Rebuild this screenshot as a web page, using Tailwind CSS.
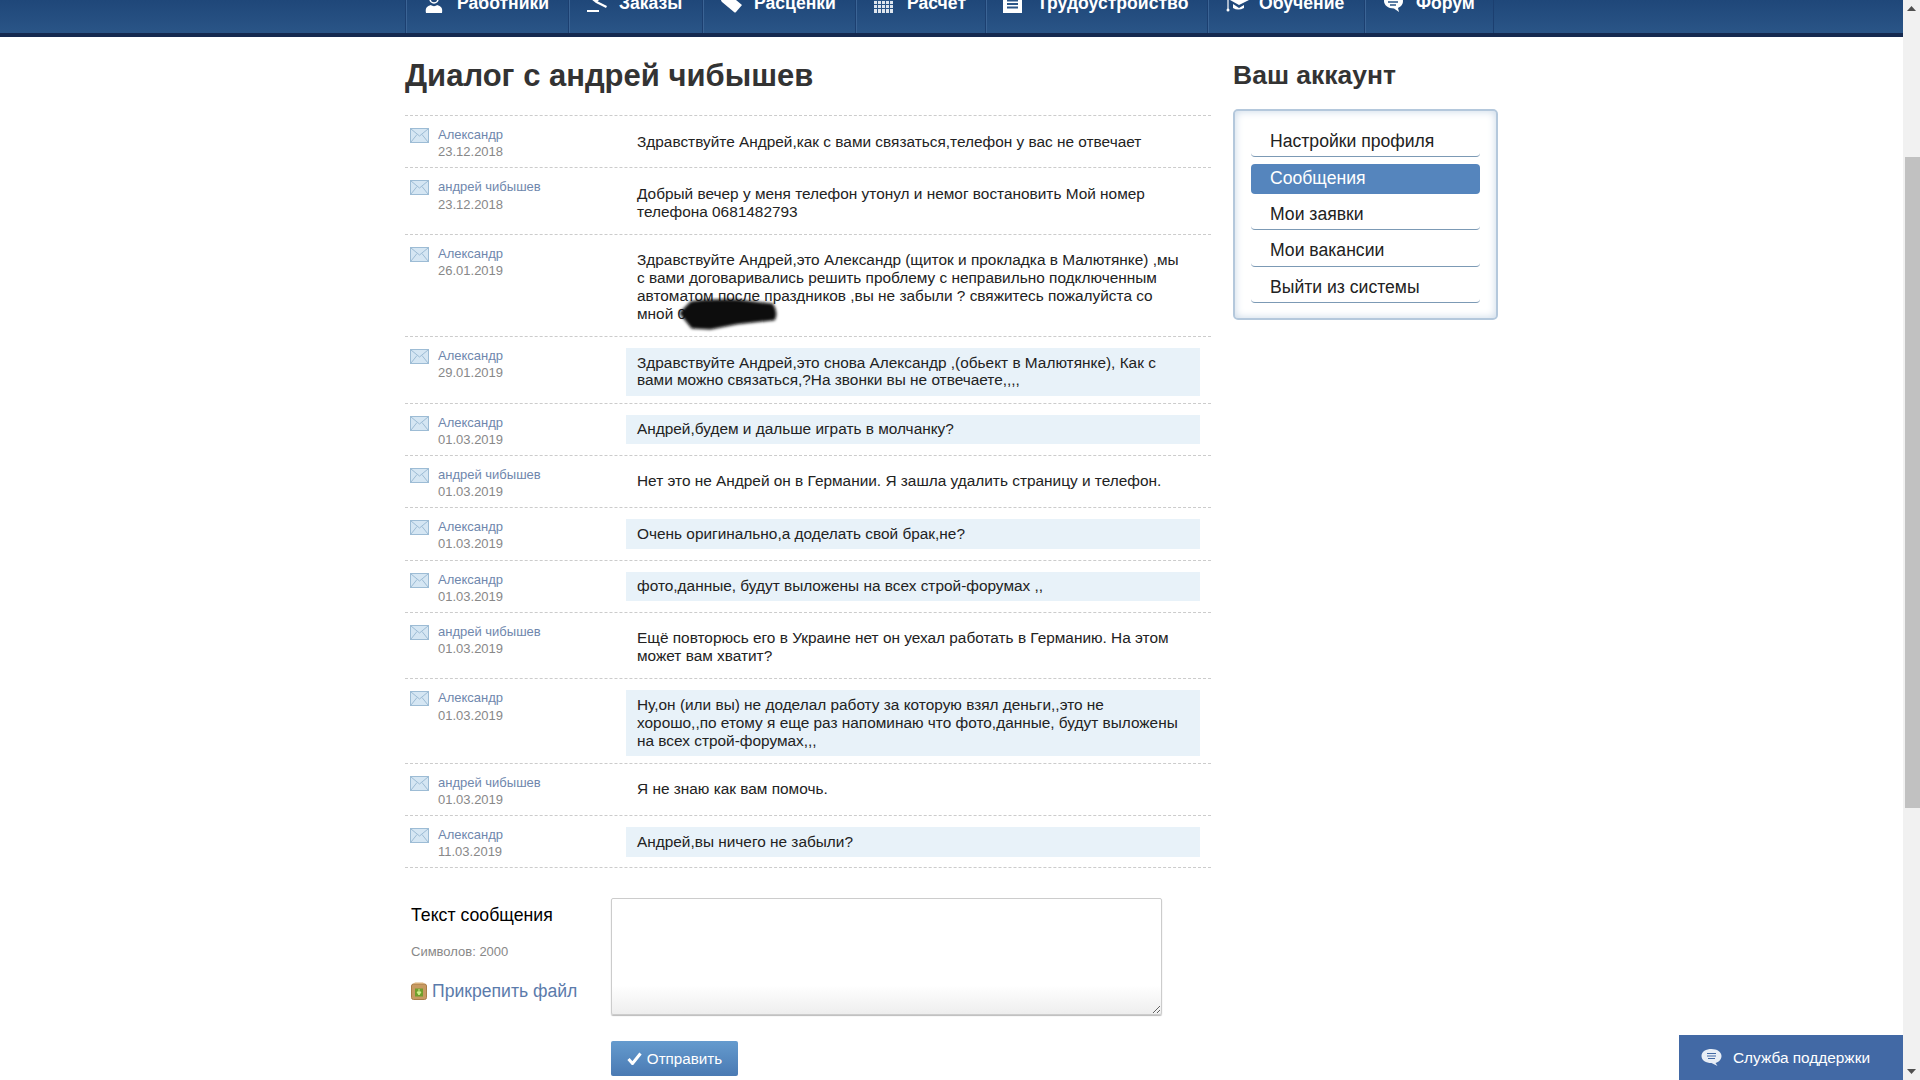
<!DOCTYPE html>
<html lang="ru">
<head>
    <meta charset="UTF-8">
    <meta name="viewport" content="width=device-width, initial-scale=1.0">
    <title>Диалог с андрей чибышев</title>
    <script src="https://cdn.jsdelivr.net/npm/@tailwindcss/browser@4"></script>
</head>
<body class="bg-white">
    <div class="relative flex h-[1080px] w-[1920px] overflow-hidden font-['Liberation_Sans',Arial,sans-serif]">
        <div class="w-[1903px]">
            <!-- Шапка, страница прокручена, верх обрезан -->
            <header class="h-[37px] border-b-[4px] border-[#15294f] bg-linear-to-b from-[#1f4779] to-[#2a5587]">
                <nav class="mx-auto flex w-[1093px] text-[17.600px] font-bold text-white">
                    <a class="h-[33px] w-[163px] overflow-hidden border-l border-[#1c3f70] pl-[19px] shadow-[inset_1px_0_0_#3b6495]">
                        <span class="-mt-[6px] flex h-[18px] items-center">
                            <span class="w-[32px]">
                                <svg width="18" height="18" viewBox="0 0 18 18" class="mt-[1px]"><circle cx="9" cy="4" r="4" fill="none" stroke="#fff" stroke-width="1.5"/><path d="M1 18c-1-5 1-7 5-8 1 1.500 5 1.500 6 0 4 1 6 3 5 8z" fill="#fff"/></svg>
                            </span>Работники
                        </span>
                    </a>
                    <a class="h-[33px] w-[134px] overflow-hidden border-l border-[#1c3f70] pl-[17px] shadow-[inset_1px_0_0_#3b6495]">
                        <span class="-mt-[6px] flex h-[18px] items-center">
                            <span class="w-[33px]">
                                <svg width="22" height="18" viewBox="0 0 22 18" class="mt-[1px]"><path d="M8 1l5 4-3 3-5-4zM11 6l10 5-1 2-10-5z" fill="#fff"/><rect x="1" y="15" width="12" height="2" fill="#fff"/></svg>
                            </span>Заказы
                        </span>
                    </a>
                    <a class="h-[33px] w-[153px] overflow-hidden border-l border-[#1c3f70] pl-[17px] shadow-[inset_1px_0_0_#3b6495]">
                        <span class="-mt-[6px] flex h-[18px] items-center">
                            <span class="w-[34px]">
                                <svg width="23" height="19" viewBox="0 0 23 19" class="mt-[1px]"><path d="M1 1h9l12 10-6 7q-1 1-2 0L2 8q-1-1-1-2z" fill="#fff"/></svg>
                            </span>Расценки
                        </span>
                    </a>
                    <a class="h-[33px] w-[130px] overflow-hidden border-l border-[#1c3f70] pl-[18px] shadow-[inset_1px_0_0_#3b6495]">
                        <span class="-mt-[6px] flex h-[18px] items-center">
                            <span class="w-[33px]">
                                <svg width="19" height="19" viewBox="0 0 19 19" class="mt-[1px]"><rect x="0" y="0" width="19" height="19" fill="#dfe6ef"/><path d="M3.500 0v19M7.500 0v19M11.500 0v19M15.500 0v19M0 6.500h19M0 10.500h19M0 14.500h19" stroke="#2a5587" stroke-width="1"/></svg>
                            </span>Расчет
                        </span>
                    </a>
                    <a class="h-[33px] w-[222px] overflow-hidden border-l border-[#1c3f70] pl-[17px] shadow-[inset_1px_0_0_#3b6495]">
                        <span class="-mt-[6px] flex h-[18px] items-center">
                            <span class="w-[34px]">
                                <svg width="19" height="19" viewBox="0 0 19 19" class="mt-[1px]"><rect width="19" height="19" fill="#fff"/><path d="M4 6.500h11M4 10h11M4 13.500h11" stroke="#2a5587" stroke-width="2"/></svg>
                            </span>Трудоустройство
                        </span>
                    </a>
                    <a class="h-[33px] w-[157px] overflow-hidden border-l border-[#1c3f70] pl-[18px] shadow-[inset_1px_0_0_#3b6495]">
                        <span class="-mt-[6px] flex h-[18px] items-center">
                            <span class="w-[33px]">
                                <svg width="23" height="19" viewBox="0 0 23 19" class="mt-[1px]"><path d="M13 1l10 5-10 5-9-5z" fill="#fff"/><path d="M7 10v4q5 3 11 0v-3l-5 3z" fill="#fff"/><path d="M2 6v9" stroke="#fff" stroke-width="1.200"/><circle cx="2" cy="16" r="1.500" fill="#fff"/></svg>
                            </span>Обучение
                        </span>
                    </a>
                    <a class="h-[33px] w-[130px] overflow-hidden border-x border-[#1c3f70] pl-[18px] shadow-[inset_1px_0_0_#3b6495]">
                        <span class="-mt-[6px] flex h-[18px] items-center">
                            <span class="w-[33px]">
                                <svg width="21" height="19" viewBox="0 0 21 19" class="mt-[1px]"><path d="M10 0c6 0 10 3 10 7s-3 6-5 7l1 4-5-3.500C5 14.500 1 11 1 7s4-7 9-7z" fill="#fff"/><path d="M5 5h10M5 8h10M7 11h6" stroke="#2a5587" stroke-width="1.500"/></svg>
                            </span>Форум
                        </span>
                    </a>
                </nav>
            </header>

            <main class="mx-auto flex w-[1093px] gap-[22px] pt-[18px]">
                <section class="w-[806px]">
                    <h1 class="mb-[20px] h-[40px] text-[31px] leading-[42px] font-bold text-[#333]">Диалог с андрей чибышев</h1>
                    <div id="messages" class="border-t border-dashed border-[#ccc]"></div>

                    <form class="mt-[30px] flex">
                        <div class="w-[206px] pl-[6px]">
                            <div class="mt-[7px] text-[17.700px] leading-[20px] text-black">Текст сообщения</div>
                            <div class="mt-[19px] text-[13px] leading-[16px] text-[#888]">Символов: 2000</div>
                            <a class="mt-[20px] flex items-center gap-[5px] text-[17.600px] leading-[22px] text-[#5b7bab]">
                                <svg width="16" height="18" viewBox="0 0 16 18"><rect x="0.500" y="2" width="15" height="15.500" rx="2" fill="#c79a62" stroke="#a97c48"/><path d="M2 2l2-1.500h8L14 2z" fill="#dab27d"/><rect x="4" y="6.500" width="8" height="8" fill="#6f9e2c"/><path d="M8 7v3M6 10l2 3 2-3z" fill="#cdf08a" stroke="#cdf08a"/></svg>
                                Прикрепить файл
                            </a>
                        </div>
                        <div>
                            <textarea class="block h-[117px] w-[551px] resize rounded-[2px] border border-[#ccc] bg-linear-to-b from-white from-75% to-[#eeeeee] shadow-[0_1px_1px_#bbb]"></textarea>
                            <button type="button" class="mt-[26px] flex h-[35px] w-[127px] items-center justify-center gap-[5px] rounded-[2px] bg-linear-to-b from-[#659bce] to-[#4a7ab3] text-[15.200px] text-white">
                                <svg width="15" height="13" viewBox="0 0 15 13"><path d="M1.500 7l4 4.500L13.500 1.500" fill="none" stroke="#fff" stroke-width="3"/></svg>
                                Отправить
                            </button>
                        </div>
                    </form>
                </section>

                <aside class="w-[265px]">
                    <h2 class="mb-[14px] h-[40px] text-[26.500px] leading-[40px] font-bold text-[#333]">Ваш аккаунт</h2>
                    <div class="h-[211px] rounded-[5px] border-2 border-[#b4c8dc] px-[16px] pt-[16px] text-[17.600px] text-[#222] shadow-[inset_0_0_8px_#c6d6e6]">
                        <a class="mb-[6.500px] block h-[30px] rounded-b-[4px] border-b border-[#7c9ab5] pl-[19px] leading-[28px]">Настройки профиля</a>
                        <a class="mb-[6.500px] block h-[30px] rounded-[4px] bg-[#5585bd] pl-[19px] leading-[29px] text-white">Сообщения</a>
                        <a class="mb-[6.500px] block h-[30px] rounded-b-[4px] border-b border-[#7c9ab5] pl-[19px] leading-[28px]">Мои заявки</a>
                        <a class="mb-[6.500px] block h-[30px] rounded-b-[4px] border-b border-[#7c9ab5] pl-[19px] leading-[27px]">Мои вакансии</a>
                        <a class="mb-[6.500px] block h-[30px] rounded-b-[4px] border-b border-[#7c9ab5] pl-[19px] leading-[29px]">Выйти из системы</a>
                    </div>
                </aside>
            </main>
        </div>

        <!-- Полоса прокрутки -->
        <div class="flex w-[17px] flex-col bg-[#f1f1f1]">
            <div class="flex h-[17px] items-center justify-center">
                <svg width="9" height="5" viewBox="0 0 9 5"><path d="M4.500 0L9 5H0z" fill="#505050"/></svg>
            </div>
            <div class="mt-[140px] ml-[2px] h-[651px] bg-[#c1c1c1]"></div>
            <div class="mt-auto flex h-[17px] items-center justify-center">
                <svg width="9" height="5" viewBox="0 0 9 5"><path d="M0 0h9L4.500 5z" fill="#505050"/></svg>
            </div>
        </div>

        <!-- Служба поддержки -->
        <a class="absolute right-[17px] bottom-0 flex h-[45px] w-[224px] items-center gap-[11px] bg-[#4269a5] pl-[22px] text-[15.400px] text-white">
            <svg width="21" height="19" viewBox="0 0 21 19"><path d="M10.500 1c5.500 0 10 2.800 10 7s-4 6.500-6 7l2 3-6-3C5 15 .5 12.500 .5 8s4.500-7 10-7z" fill="#e8eef6"/><path d="M6 5.500h9M6 8h9M7 10.500h7" stroke="#4269a5" stroke-width="1.200"/></svg>
            Служба поддержки
        </a>
    </div>

    <script>
        const messages = [
            { name: "Александр", date: "23.12.2018", text: "Здравствуйте Андрей,как с вами связаться,телефон у вас не отвечает" },
            { name: "андрей чибышев", date: "23.12.2018", text: "Добрый вечер у меня телефон утонул и немог востановить Мой номер телефона 0681482793" },
            { name: "Александр", date: "26.01.2019", text: "Здравствуйте Андрей,это Александр (щиток и прокладка в Малютянке) ,мы с вами договаривались решить проблему с неправильно подключенным автоматом после праздников ,вы не забыли ? свяжитесь пожалуйста со мной 09", hidden: true },
            { name: "Александр", date: "29.01.2019", mine: true, text: "Здравствуйте Андрей,это снова Александр ,(обьект в Малютянке), Как с вами можно связаться,?На звонки вы не отвечаете,,,," },
            { name: "Александр", date: "01.03.2019", mine: true, text: "Андрей,будем и дальше играть в молчанку?" },
            { name: "андрей чибышев", date: "01.03.2019", text: "Нет это не Андрей он в Германии. Я зашла удалить страницу и телефон." },
            { name: "Александр", date: "01.03.2019", mine: true, text: "Очень оригинально,а доделать свой брак,не?" },
            { name: "Александр", date: "01.03.2019", mine: true, text: "фото,данные, будут выложены на всех строй-форумах ,," },
            { name: "андрей чибышев", date: "01.03.2019", text: "Ещё повторюсь его в Украине нет он уехал работать в Германию. На этом может вам хватит?" },
            { name: "Александр", date: "01.03.2019", mine: true, text: "Ну,он (или вы) не доделал работу за которую взял деньги,,это не хорошо,,по етому я еще раз напоминаю что фото,данные, будут выложены на всех строй-форумах,,," },
            { name: "андрей чибышев", date: "01.03.2019", text: "Я не знаю как вам помочь." },
            { name: "Александр", date: "11.03.2019", mine: true, text: "Андрей,вы ничего не забыли?" }
        ];
        const envelope = `<svg width="19" height="15" viewBox="0 0 19 15" class="mt-[2px] shrink-0"><rect x="0.500" y="0.500" width="18" height="14" fill="#d5e6f3" stroke="#9dbcd5"/><path d="M1 1l8.500 7L18 1M1 14l6-7.500M18 14l-6-7.500" fill="none" stroke="#9dbcd5"/></svg>`;
        const blot = `<svg width="106" height="36" viewBox="0 0 102 34" class="absolute top-[62px] left-[270px]"><defs><filter id="smear"><feGaussianBlur stdDeviation="1.500"/></filter></defs><path d="M4 15L15 4q15-3 45-2l34 4q6 8 2 16l-36 4-26 5-18-1z" fill="#0a0a0a" filter="url(#smear)"/></svg>`;
        document.getElementById("messages").innerHTML = messages.map((m) => `
            <div class="relative flex border-b border-dashed border-[#ccc]">
                <div class="flex min-h-[51.300px] w-[221px] gap-[9px] pt-[10px] pl-[5px]">
                    ${envelope}
                    <div class="text-[13px] leading-[17.200px]">
                        <div class="text-[#6f87ad]">${m.name}</div>
                        <div class="text-[#888]">${m.date}</div>
                    </div>
                </div>
                <div class="w-[574px] pt-[11px] pb-[7px]">
                    <div class="pt-[5.500px] pr-[16px] pb-[6.500px] pl-[11px] text-[15.400px] leading-[17.800px] text-[#222] ${m.mine ? "bg-[#e8f2f9]" : ""}">${m.text}</div>
                </div>
                ${m.hidden ? blot : ""}
            </div>`).join("");
    </script>
</body>
</html>
